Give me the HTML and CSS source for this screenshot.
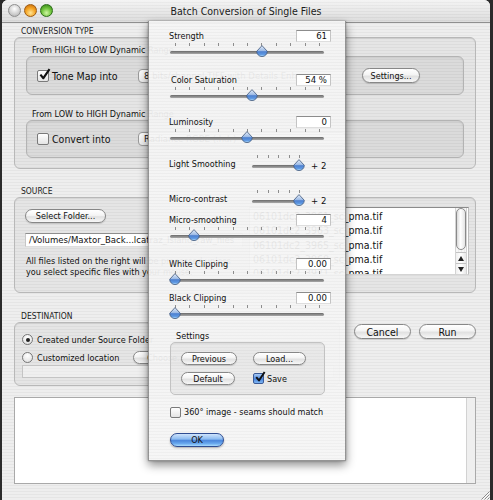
FILE: index.html
```html
<!DOCTYPE html>
<html>
<head>
<meta charset="utf-8">
<title>Batch Conversion of Single Files</title>
<link rel="stylesheet" href="styles.css">
</head>
<body>
<svg class="defs" width="0" height="0">
  <defs>
    <linearGradient id="tg" x1="0" y1="0" x2="0" y2="1">
      <stop offset="0" stop-color="#e6eef9"/>
      <stop offset=".48" stop-color="#9ab9e5"/>
      <stop offset=".55" stop-color="#4d80d0"/>
      <stop offset=".8" stop-color="#5c97e2"/>
      <stop offset="1" stop-color="#b8e2ff"/>
    </linearGradient>
  </defs>
</svg>
<div class="window">
  <div class="titlebar">
    <div class="lights"><span class="light gray"></span><span class="light orange"></span><span class="light green"></span></div>
    <div class="title">Batch Conversion of Single Files</div>
    <div></div>
  </div>
  <div class="content">
    <div class="sec-label">CONVERSION TYPE</div>
    <div class="group g1">
      <div class="sub-label">From HIGH to LOW Dynamic Range</div>
      <div class="inner">
        <span class="cb"><svg class="check" viewBox="0 0 14 14"><path d="M2.6 7.2 L5.8 11 L12.4 1.2" fill="none" stroke="#111" stroke-width="2.3" stroke-linejoin="round"/></svg></span>
        <span class="big">Tone Map into</span>
        <span class="popup">8 bits/channel TIFF with Details Enhancer</span>
        <span class="btn settings">Settings...</span>
      </div>
      <div class="sub-label second">From LOW to HIGH Dynamic Range</div>
      <div class="inner inner2">
        <span class="cb"></span>
        <span class="big">Convert into</span>
        <span class="popup">Radiance RGBE (.hdr)</span>
      </div>
    </div>

    <div class="sec-label gap">SOURCE</div>
    <div class="group g2">
      <div class="src-left">
        <span class="btn select">Select Folder...</span>
        <div class="path">/Volumes/Maxtor_Back...lcatraz_Island_raw_files</div>
        <p class="info">All files listed on the right will be processed unless<br>you select specific files with your mouse.</p>
      </div>
      <div class="list">
        <div class="list-items">
          <div>06101dc2_3961_sc_pma.tif</div>
          <div>06101dc2_3963_sc_pma.tif</div>
          <div>06101dc2_3965_sc_pma.tif</div>
          <div>06101dc2_3968_sc_pma.tif</div>
          <div>06101dc2_3971_sc_pma.tif</div>
        </div>
        <div class="vscroll">
          <div class="sthumb"></div>
          <div class="sspace"></div>
          <div class="sarrow"><svg viewBox="0 0 6 5" class="tri"><path d="M3 0 L6 5 L0 5 Z" fill="#222"/></svg></div>
          <div class="sarrow"><svg viewBox="0 0 6 5" class="tri"><path d="M0 0 L6 0 L3 5 Z" fill="#222"/></svg></div>
        </div>
      </div>
    </div>

    <div class="sec-label gap dest-gap">DESTINATION</div>
    <div class="dest-row">
      <div class="group g3">
        <div class="opt"><span class="radio on"></span><span>Created under Source Folder</span></div>
        <div class="opt opt2"><span class="radio"></span><span class="opt-label">Customized location</span><span class="btn choose">Choose...</span></div>
        <div class="dest-field"></div>
      </div>
      <div class="actions"><span class="btn act">Cancel</span><span class="btn act">Run</span></div>
    </div>
    <div class="log"><div class="log-bar"></div></div>
  </div>
  <svg class="grip" viewBox="0 0 10 10"><path d="M9.5 1.5 L1.5 9.5 M9.5 4.5 L4.5 9.5 M9.5 7.5 L7.5 9.5" stroke="#8a8a8a" stroke-width="1"/><path d="M9.5 2.5 L2.5 9.5 M9.5 5.5 L5.5 9.5 M9.5 8.5 L8.5 9.5" stroke="#fff" stroke-width=".8"/></svg>
</div>

<div class="sheet">
  <div class="srow">
    <div class="shead"><span>Strength</span><span class="field">61</span></div>
    <div class="slider">
      <div class="ticks"><i></i><i></i><i></i><i></i><i></i><i></i><i></i><i></i><i></i><i></i><i></i></div>
      <div class="track"></div>
      <svg class="thumb" style="left:92px" viewBox="0 0 12 12"><path d="M6 .6 L11.3 6.3 A5.3 5.3 0 0 1 .7 6.3 Z" fill="url(#tg)" stroke="#40587c" stroke-width=".8"/></svg>
    </div>
  </div>
  <div class="srow r-sat">
    <div class="shead"><span class="indent">Color Saturation</span><span class="field">54 %</span></div>
    <div class="slider">
      <div class="ticks"><i></i><i></i><i></i><i></i><i></i><i></i><i></i><i></i><i></i><i></i><i></i></div>
      <div class="track"></div>
      <svg class="thumb" style="left:82px" viewBox="0 0 12 12"><path d="M6 .6 L11.3 6.3 A5.3 5.3 0 0 1 .7 6.3 Z" fill="url(#tg)" stroke="#40587c" stroke-width=".8"/></svg>
    </div>
  </div>
  <div class="srow r-lum">
    <div class="shead"><span>Luminosity</span><span class="field">0</span></div>
    <div class="slider">
      <div class="ticks"><i></i><i></i><i></i><i></i><i></i><i></i><i></i><i></i><i></i><i></i><i></i></div>
      <div class="track"></div>
      <svg class="thumb" style="left:77px" viewBox="0 0 12 12"><path d="M6 .6 L11.3 6.3 A5.3 5.3 0 0 1 .7 6.3 Z" fill="url(#tg)" stroke="#40587c" stroke-width=".8"/></svg>
    </div>
  </div>
  <div class="srow-short r-light">
    <span class="short-label">Light Smoothing</span>
    <div class="slider short">
      <div class="ticks"><i></i><i></i><i></i><i></i><i></i></div>
      <div class="track"></div>
      <svg class="thumb" style="left:47px" viewBox="0 0 12 12"><path d="M6 .6 L11.3 6.3 A5.3 5.3 0 0 1 .7 6.3 Z" fill="url(#tg)" stroke="#40587c" stroke-width=".8"/></svg>
    </div>
    <span class="plus">+ 2</span>
  </div>
  <div class="srow-short r-micro">
    <span class="short-label">Micro-contrast</span>
    <div class="slider short">
      <div class="ticks"><i></i><i></i><i></i><i></i><i></i></div>
      <div class="track"></div>
      <svg class="thumb" style="left:47px" viewBox="0 0 12 12"><path d="M6 .6 L11.3 6.3 A5.3 5.3 0 0 1 .7 6.3 Z" fill="url(#tg)" stroke="#40587c" stroke-width=".8"/></svg>
    </div>
    <span class="plus">+ 2</span>
  </div>
  <div class="srow r-msm">
    <div class="shead"><span>Micro-smoothing</span><span class="field">4</span></div>
    <div class="slider">
      <div class="ticks"><i></i><i></i><i></i><i></i><i></i><i></i><i></i><i></i><i></i><i></i><i></i></div>
      <div class="track"></div>
      <svg class="thumb" style="left:24px" viewBox="0 0 12 12"><path d="M6 .6 L11.3 6.3 A5.3 5.3 0 0 1 .7 6.3 Z" fill="url(#tg)" stroke="#40587c" stroke-width=".8"/></svg>
    </div>
  </div>
  <div class="srow r-white">
    <div class="shead"><span>White Clipping</span><span class="field">0.00</span></div>
    <div class="slider">
      <div class="ticks"><i></i><i></i><i></i><i></i><i></i><i></i><i></i><i></i><i></i><i></i><i></i></div>
      <div class="track"></div>
      <svg class="thumb" style="left:5px" viewBox="0 0 12 12"><path d="M6 .6 L11.3 6.3 A5.3 5.3 0 0 1 .7 6.3 Z" fill="url(#tg)" stroke="#40587c" stroke-width=".8"/></svg>
    </div>
  </div>
  <div class="srow r-black">
    <div class="shead"><span>Black Clipping</span><span class="field">0.00</span></div>
    <div class="slider">
      <div class="ticks"><i></i><i></i><i></i><i></i><i></i><i></i><i></i><i></i><i></i><i></i><i></i></div>
      <div class="track"></div>
      <svg class="thumb" style="left:5px" viewBox="0 0 12 12"><path d="M6 .6 L11.3 6.3 A5.3 5.3 0 0 1 .7 6.3 Z" fill="url(#tg)" stroke="#40587c" stroke-width=".8"/></svg>
    </div>
  </div>

  <div class="set-label">Settings</div>
  <div class="sgroup">
    <span class="btn sbtn w56">Previous</span>
    <span class="btn sbtn w53">Load...</span>
    <span class="btn sbtn w54">Default</span>
    <span class="save"><span class="cb small blue"><svg class="check" viewBox="0 0 14 14"><path d="M2.6 7.2 L5.8 11 L12.4 1.2" fill="none" stroke="#111" stroke-width="2.3" stroke-linejoin="round"/></svg></span>Save</span>
  </div>
  <div class="opt360"><span class="cb small"></span><span>360° image - seams should match</span></div>
  <span class="btn ok">OK</span>
</div>
</body>
</html>
```

FILE: styles.css
```css
* { box-sizing: border-box; }

body {
  margin: 0;
  width: 493px;
  height: 500px;
  overflow: hidden;
  position: relative;
  background: #2b2b2b;
  font-family: "DejaVu Sans Condensed", "DejaVu Sans", sans-serif;
  font-stretch: condensed;
  color: #111;
}

.defs { display: block; width: 0; height: 0; overflow: hidden; }

.window {
  position: relative;
  margin-left: 2px;
  width: 488px;
  height: 500px;
  border-radius: 6px 6px 0 0;
  overflow: hidden;
  background: repeating-linear-gradient(#eeeeee 0 2px, #e5e5e5 2px 3px);
}

/* title bar */
.titlebar {
  height: 23px;
  display: grid;
  grid-template-columns: 1fr auto 1fr;
  align-items: center;
  border-bottom: 1px solid #8f8f8f;
  background:
    linear-gradient(rgba(255,255,255,.35), rgba(0,0,0,.07)),
    repeating-linear-gradient(#eeeeee 0 2px, #e3e3e3 2px 3px);
}
.lights { display: flex; gap: 3px; padding-left: 6px; margin-top: -2px; }
.light { width: 13px; height: 13px; border-radius: 50%; }
.light.gray { background: radial-gradient(circle at 50% 35%, #ffffff, #d2d2d2 55%, #a9a9a9); border: 1px solid #8e8e8e; }
.light.orange { background: radial-gradient(circle at 50% 72%, #ffe596, #f4a424 50%, #c26508); border: 1px solid #9c5a12; }
.light.green { background: radial-gradient(circle at 50% 72%, #d0f7a4, #6fc33b 50%, #2e7c15); border: 1px solid #2c6d19; }
.title { font-size: 10.5px; color: #1b1b1b; margin-top: -1px; }

/* content */
.content { padding: 2px 14px 0 12px; }

.sec-label {
  height: 12px;
  line-height: 12px;
  font-size: 8.5px;
  padding-left: 7px;
  color: #1c1c1c;
}
.sec-label.gap { margin-top: 16px; }
.sec-label.dest-gap { margin-top: 17px; }

.group {
  border: 1px solid #b8b8b8;
  border-radius: 6px;
  background: rgba(0,0,0,.035);
  box-shadow: inset 0 1px 1px rgba(0,0,0,.07);
}

.g1 { height: 132px; padding: 7px 11px 0 11px; }
.sub-label {
  height: 11px;
  line-height: 11px;
  font-size: 9px;
  padding-left: 6px;
}
.sub-label.second { margin-top: 14px; }
.inner {
  height: 39px;
  border: 1px solid #b3b3b3;
  border-radius: 6px;
  background: rgba(0,0,0,.045);
  box-shadow: inset 0 1px 2px rgba(0,0,0,.08);
  display: flex;
  align-items: center;
  padding-left: 10px;
}
.inner.inner2 { height: 38px; }

.cb {
  position: relative;
  flex: none;
  width: 12px;
  height: 12px;
  border: 1px solid #7a7a7a;
  border-radius: 2px;
  background: linear-gradient(#ffffff, #e4e4e4);
  margin-right: 3px;
}
.cb.small { width: 11px; height: 11px; margin-right: 0; }
.cb.blue { background: linear-gradient(#a8cbf5, #4a84dc 55%, #7fb7f3); border-color: #3a5a96; }
.check { position: absolute; left: 0; top: -3px; width: 13px; height: 13px; overflow: visible; }
.cb.small .check { width: 12px; height: 12px; top: -3px; }

.big { width: 86px; font-size: 10.5px; white-space: nowrap; }

.popup {
  flex: none;
  width: 208px;
  height: 14px;
  border: 1px solid #9a9a9a;
  border-radius: 4px;
  background: linear-gradient(#ffffff, #ebebeb);
  font-size: 9.5px;
  line-height: 12px;
  padding-left: 5px;
  white-space: nowrap;
  overflow: hidden;
}

.btn {
  flex: none;
  display: flex;
  align-items: center;
  justify-content: center;
  border: 1px solid #878787;
  border-radius: 8px;
  background: linear-gradient(#ffffff 0%, #f4f4f4 45%, #e1e1e1 56%, #f7f7f7 100%);
  box-shadow: 0 1px 1px rgba(0,0,0,.15);
  font-size: 9px;
  white-space: nowrap;
  color: #111;
}
.settings { margin-left: 16px; width: 58px; height: 15px; }

/* source */
.g2 {
  height: 96px;
  display: grid;
  grid-template-columns: 220px 220px;
  column-gap: 4px;
  padding: 9px 0 0 10px;
}
.src-left { display: flex; flex-direction: column; align-items: flex-start; min-width: 0; }
.select { margin-top: 2px; width: 81px; height: 14px; }
.path {
  margin-top: 10px;
  width: 218px;
  height: 14px;
  background: #fff;
  border: 1px solid;
  border-color: #8e8e8e #c6c6c6 #dedede #c6c6c6;
  font-size: 9.5px;
  line-height: 12px;
  padding-left: 3px;
  white-space: nowrap;
  overflow: hidden;
}
.info { margin: 9px 0 0 1px; font-size: 9px; line-height: 11px; white-space: nowrap; }

.list {
  height: 68px;
  background: #fff;
  border: 1px solid;
  border-color: #8b8b8b #bdbdbd #d4d4d4 #bdbdbd;
  display: flex;
}
.list-items {
  flex: 1;
  min-width: 0;
  padding: 1px 0 0 3px;
  font-size: 10.5px;
  line-height: 14.3px;
  white-space: nowrap;
  overflow: hidden;
}
.vscroll {
  width: 12px;
  margin-right: 1px;
  display: flex;
  flex-direction: column;
  background: repeating-linear-gradient(to right, #f6f6f6 0 2px, #ececec 2px 3px);
  border-left: 1px solid #d3d3d3;
  border-right: 1px solid #d3d3d3;
}
.sthumb {
  height: 42px;
  border: 1px solid #8a8a8a;
  border-radius: 6px;
  background: linear-gradient(to right, #dadada, #ffffff 45%, #e4e4e4);
}
.sspace { flex: 1; }
.sarrow {
  height: 11px;
  display: grid;
  place-items: center;
  border-top: 1px solid #c3c3c3;
  background: linear-gradient(to right, #f0f0f0, #ffffff 50%, #e8e8e8);
}
.tri { width: 6px; height: 5px; }

/* destination */
.dest-row { display: flex; align-items: flex-start; }
.g3 { width: 326px; height: 64px; padding: 10px 0 0 7px; }
.opt { display: flex; align-items: center; height: 13px; font-size: 9px; gap: 4px; white-space: nowrap; }
.opt2 { margin-top: 5px; }
.radio {
  flex: none;
  width: 11px;
  height: 11px;
  border-radius: 50%;
  border: 1px solid #777;
  background: radial-gradient(circle at 50% 30%, #ffffff, #dcdcdc);
  display: grid;
  place-items: center;
}
.radio.on::after { content: ""; width: 4px; height: 4px; border-radius: 50%; background: #222; }
.opt-label { width: 84px; }
.choose { margin-left: 8px; width: 66px; height: 13px; }
.dest-field {
  margin-top: 1px;
  width: 312px;
  height: 13px;
  border: 1px solid #c4c4c4;
  background: rgba(255,255,255,.4);
}
.actions { margin-left: auto; margin-top: 2px; display: flex; gap: 8px; }
.act { width: 57px; height: 15px; font-size: 10.5px; }

.log {
  margin-top: 11px;
  height: 87px;
  background: #fff;
  border: 1px solid #a9a9a9;
  display: flex;
  justify-content: flex-end;
}
.log-bar { width: 9px; background: #efefef; border-left: 1px solid #d2d2d2; }

.grip { position: absolute; right: 0; bottom: 0; width: 10px; height: 10px; }

/* sheet */
.sheet {
  position: absolute;
  left: 148px;
  top: 21px;
  width: 198px;
  height: 440px;
  padding: 9px 14px 0 20px;
  background: repeating-linear-gradient(rgba(245,245,245,.94) 0 2px, rgba(238,238,238,.94) 2px 3px);
  border: 1px solid rgba(70,70,70,.55);
  border-top: none;
  box-shadow: 0 4px 9px rgba(0,0,0,.45), 0 0 2px rgba(0,0,0,.3);
  font-size: 9px;
}
.shead {
  display: flex;
  justify-content: space-between;
  align-items: center;
  height: 12px;
  line-height: 12px;
  white-space: nowrap;
}
.indent { padding-left: 2px; }
.field {
  width: 35px;
  height: 12px;
  background: #fff;
  border: 1px solid;
  border-color: #8c8c8c #c4c4c4 #dedede #c4c4c4;
  font-size: 9.5px;
  line-height: 10px;
  text-align: right;
  padding-right: 3px;
}
.slider { position: relative; width: 154px; height: 16px; margin-left: 1px; }
.ticks {
  position: absolute;
  left: 5px;
  right: 4px;
  top: 1px;
  height: 3px;
  display: flex;
  justify-content: space-between;
}
.ticks i { width: 1px; background: #8d8d8d; }
.track {
  position: absolute;
  left: 0;
  right: 0;
  top: 9px;
  height: 3px;
  border-radius: 2px;
  background: linear-gradient(#6a6a6a, #a9a9a9);
}
.thumb { position: absolute; top: 3px; width: 12px; height: 12px; margin-left: -6px; overflow: visible; }

.r-sat { margin-top: 16px; }
.r-lum { margin-top: 14px; }
.r-light { margin-top: 8px; }
.r-micro { margin-top: 15px; }
.r-msm { margin-top: 7px; }
.r-white { margin-top: 16px; }
.r-black { margin-top: 6px; }

.srow-short { display: flex; height: 20px; }
.short-label { width: 83px; margin-top: 6px; line-height: 12px; white-space: nowrap; }
.slider.short { width: 48px; height: 20px; margin-left: 0; }
.short .ticks { top: 3px; left: 5px; right: 0; }
.short .track { top: 13px; }
.short .thumb { top: 7px; }
.plus { margin-left: 11px; margin-top: 8px; line-height: 12px; font-size: 9.5px; }

.set-label { margin-top: 10px; padding-left: 7px; height: 12px; line-height: 12px; }
.sgroup {
  margin-left: 1px;
  width: 155px;
  height: 53px;
  border: 1px solid #c2c2c2;
  border-radius: 5px;
  background: rgba(0,0,0,.045);
  box-shadow: inset 0 1px 1px rgba(0,0,0,.06);
  display: grid;
  grid-template-columns: 56px 56px;
  grid-auto-rows: 13px;
  column-gap: 16px;
  row-gap: 7px;
  align-content: start;
  padding: 9px 0 0 10px;
}
.sbtn { height: 13px; }
.w56 { width: 56px; }
.w53 { width: 53px; }
.w54 { width: 54px; }
.save { display: flex; align-items: center; gap: 3px; }

.opt360 { margin-top: 11px; margin-left: 1px; display: flex; align-items: center; gap: 3px; height: 12px; white-space: nowrap; }

.ok {
  margin-top: 15px;
  margin-left: 1px;
  width: 54px;
  height: 14px;
  border-color: #2f4d92;
  background: linear-gradient(#cfe4fc 0%, #8dbcf1 42%, #4a86dc 55%, #6aa9ee 80%, #a9dcff 100%);
  box-shadow: 0 1px 2px rgba(0,0,0,.3);
}
```
